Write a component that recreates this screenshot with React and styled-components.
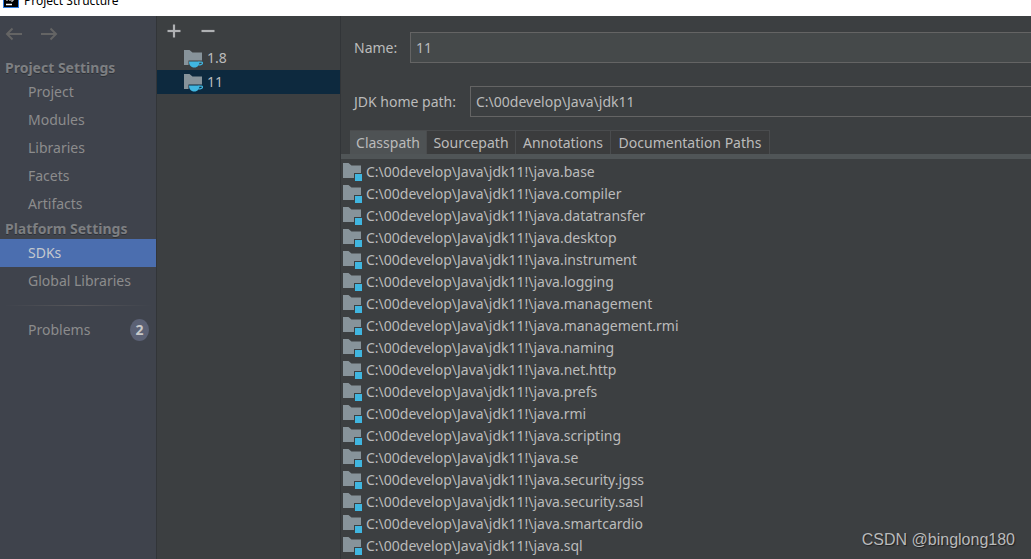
import { useState } from 'react';
import styled, { createGlobalStyle } from 'styled-components';

const GlobalStyle = createGlobalStyle`
    * {
        box-sizing: border-box;
    }
    body {
        margin: 0;
        background: #3c3f41;
        color: #bbbbbb;
        font-family: "Noto Sans", "Open Sans", sans-serif;
        font-size: 14px;
        line-height: 22px;
        overflow: hidden;
    }
    button, input {
        font: inherit;
        color: inherit;
        margin: 0;
    }
    button {
        border: 0;
        background: none;
        padding: 0;
    }
    ul {
        list-style: none;
        margin: 0;
        padding: 0;
    }
`;

const Window = styled.div`
    display: flex;
    flex-direction: column;
    height: 100vh;
    overflow: hidden;
`;

const TitleBar = styled.header`
    display: flex;
    align-items: flex-end;
    gap: 5px;
    height: 16px;
    padding: 0 3px 8px;
    overflow: hidden;
    background: #ffffff;
    color: #000000;
    flex: none;
`;

const Title = styled.span`
    font-size: 12px;
    line-height: 14px;
`;

const Body = styled.div`
    display: flex;
    flex: 1;
    min-height: 0;
`;

const Sidebar = styled.nav`
    width: 157px;
    flex: none;
    background: #3f434c;
    border-right: 1px solid #323538;
    color: #8c8c8c;
`;

const NavArrows = styled.div`
    display: flex;
    gap: 15px;
    height: 41px;
    padding: 8px 4px;
    align-items: flex-start;
`;

const IconButton = styled.button`
    display: flex;
    width: 20px;
    height: 20px;
    align-items: center;
    justify-content: center;
`;

const GroupTitle = styled.h2`
    margin: 0;
    padding-left: 5px;
    font-size: 14px;
    line-height: 21px;
    font-weight: bold;
    color: #7d7f82;
    text-shadow: 0 1px 0 #2e3136;
    white-space: nowrap;
`;

const NavItem = styled.a`
    display: flex;
    align-items: center;
    justify-content: space-between;
    height: 28px;
    padding: 0 7px 0 28px;
    color: ${(p) => (p.$active ? '#c4c8ce' : 'inherit')};
    background: ${(p) => (p.$active ? '#4b6eaf' : 'transparent')};
    text-decoration: none;
    white-space: nowrap;
`;

const Separator = styled.hr`
    height: 1px;
    border: 0;
    margin: 10px 4px;
    background: linear-gradient(to right, #3f434c, #56565a, #3f434c);
`;

const Badge = styled.span`
    width: 19px;
    height: 22px;
    border-radius: 50%;
    background: #5b6175;
    color: #c8c8c8;
    font-weight: bold;
    text-align: center;
`;

const SdkPanel = styled.section`
    width: 184px;
    flex: none;
    border-right: 1px solid #323538;
`;

const SdkToolbar = styled.div`
    display: flex;
    gap: 14px;
    height: 30px;
    padding: 5px 7px;
`;

const SdkItem = styled.button`
    display: flex;
    align-items: center;
    gap: 4px;
    width: 100%;
    height: 24px;
    padding-left: 26px;
    text-align: left;
    background: ${(p) => (p.$active ? '#0d293e' : 'transparent')};
`;

const Details = styled.main`
    flex: 1;
    min-width: 0;
    padding-top: 16px;
`;

const Field = styled.div`
    display: flex;
    align-items: center;
    gap: ${(p) => p.$gap}px;
    padding-left: 13px;
    margin-bottom: 23px;
`;

const Label = styled.label`
    white-space: nowrap;
    width: ${(p) => p.$width}px;
`;

const TextBox = styled.input`
    flex: 1;
    min-width: 0;
    height: 31px;
    padding: 0 5px;
    border: 1px solid #646464;
    border-right: 0;
    border-radius: 0;
    background: ${(p) => (p.$plain ? '#3c3f41' : '#45494a')};
    outline: 0;
`;

const Tabs = styled.div`
    display: flex;
    padding-left: 9px;
    margin-top: -10px;
    border-bottom: 5px solid #505557;
`;

const Tab = styled.button`
    width: ${(p) => p.$width}px;
    height: 24px;
    white-space: nowrap;
    background: ${(p) => (p.$active ? '#4e5254' : '#3b3c3d')};
    border: solid #4a4c4e;
    border-width: 1px 1px 0 0;
`;

const Entries = styled.ul`
    padding-top: 2px;
`;

const Entry = styled.li`
    display: flex;
    align-items: center;
    gap: 4px;
    height: 22px;
    padding-left: 1px;
    white-space: nowrap;
`;

const Watermark = styled.div`
    position: absolute;
    right: 16px;
    bottom: 8px;
    font-family: "Liberation Sans", Arial, sans-serif;
    font-size: 16px;
    color: #b9babb;
    text-shadow: 1px 1px 1px #222222;
`;

const AppIcon = () => (
    <svg width="16" height="16" viewBox="0 0 16 16">
        <rect x=".5" y=".5" width="15" height="15" fill="#000" stroke="#2f7de1" />
        <path d="M4 3v6M7 3v6M10 3v6H8" stroke="#fff" fill="none" />
        <path d="M3 12.500h6" stroke="#fff" strokeWidth="1.500" />
    </svg>
);

const Arrow = ({ right }) => (
    <svg width="18" height="14" viewBox="0 0 18 14" fill="none" stroke="#646464" strokeWidth="2">
        {right ? <path d="M1 7h15M10.500 1.500 16 7l-5.500 5.500" /> : <path d="M17 7H2M7.500 1.500 2 7l5.500 5.500" />}
    </svg>
);

const Sign = ({ plus }) => (
    <svg width="14" height="14" viewBox="0 0 14 14" stroke="#afb1b3" strokeWidth="2.200">
        <path d="M.5 7h13" />
        {plus && <path d="M7 .5v13" />}
    </svg>
);

const SdkIcon = () => (
    <svg width="20" height="20" viewBox="0 0 20 20">
        <path d="M1 2h5.500l3 2.500H19v8H5.500V17H1z" fill="#87939a" />
        <path d="M6 13.500h10.500c0 3.500-1.700 6-5.200 6S6 17 6 13.500z" fill="#40b6e0" />
        <path d="M15.500 14.200h3c.8 0 1 .4 1 .9 0 1.200-1.500 1.800-4 1.900" fill="none" stroke="#40b6e0" strokeWidth="1.200" />
    </svg>
);

const ModuleIcon = () => (
    <svg width="20" height="20" viewBox="0 0 20 20">
        <path d="M1 1h5.500l3 2.500H19V11h-7v5H1z" fill="#87939a" />
        <path d="M13 12h7v7h-7z" fill="#40b6e0" />
    </svg>
);

const projectItems = ['Project', 'Modules', 'Libraries', 'Facets', 'Artifacts'];
const platformItems = ['SDKs', 'Global Libraries'];
const tabs = [
    { name: 'Classpath', width: 77 },
    { name: 'Sourcepath', width: 89 },
    { name: 'Annotations', width: 95 },
    { name: 'Documentation Paths', width: 159 },
];
const modules = [
    'base', 'compiler', 'datatransfer', 'desktop', 'instrument', 'logging',
    'management', 'management.rmi', 'naming', 'net.http', 'prefs', 'rmi',
    'scripting', 'se', 'security.jgss', 'security.sasl', 'smartcardio', 'sql',
];

const App = () => {
    const [page, setPage] = useState('SDKs');
    const [sdk, setSdk] = useState('11');
    const [tab, setTab] = useState('Classpath');

    const navItem = (name, extra) => (
        <NavItem key={name} href={'#' + name} $active={page === name} onClick={() => setPage(name)}>
            {name}
            {extra}
        </NavItem>
    );

    return (
        <Window>
            <GlobalStyle />
            <TitleBar>
                <AppIcon />
                <Title>Project Structure</Title>
            </TitleBar>
            <Body>
                <Sidebar>
                    <NavArrows>
                        <IconButton aria-label="Back"><Arrow /></IconButton>
                        <IconButton aria-label="Forward"><Arrow right /></IconButton>
                    </NavArrows>
                    <GroupTitle>Project Settings</GroupTitle>
                    {projectItems.map((name) => navItem(name))}
                    <GroupTitle>Platform Settings</GroupTitle>
                    {platformItems.map((name) => navItem(name))}
                    <Separator />
                    {navItem('Problems', <Badge>2</Badge>)}
                </Sidebar>
                <SdkPanel>
                    <SdkToolbar>
                        <IconButton aria-label="Add"><Sign plus /></IconButton>
                        <IconButton aria-label="Remove"><Sign /></IconButton>
                    </SdkToolbar>
                    {['1.8', '11'].map((name) => (
                        <SdkItem key={name} $active={sdk === name} onClick={() => setSdk(name)}>
                            <SdkIcon />
                            {name}
                        </SdkItem>
                    ))}
                </SdkPanel>
                <Details>
                    <Field $gap={12}>
                        <Label htmlFor="name" $width={44}>Name:</Label>
                        <TextBox id="name" defaultValue="11" />
                    </Field>
                    <Field $gap={8}>
                        <Label htmlFor="home" $width={108}>JDK home path:</Label>
                        <TextBox id="home" $plain defaultValue="C:\00develop\Java\jdk11" />
                    </Field>
                    <Tabs role="tablist">
                        {tabs.map((t) => (
                            <Tab
                                key={t.name}
                                role="tab"
                                aria-selected={tab === t.name}
                                $width={t.width}
                                $active={tab === t.name}
                                onClick={() => setTab(t.name)}
                            >
                                {t.name}
                            </Tab>
                        ))}
                    </Tabs>
                    <Entries>
                        {modules.map((m) => (
                            <Entry key={m}>
                                <ModuleIcon />
                                {'C:\\00develop\\Java\\jdk11!\\java.' + m}
                            </Entry>
                        ))}
                    </Entries>
                </Details>
            </Body>
            <Watermark>CSDN @binglong180</Watermark>
        </Window>
    );
};

export default App;
